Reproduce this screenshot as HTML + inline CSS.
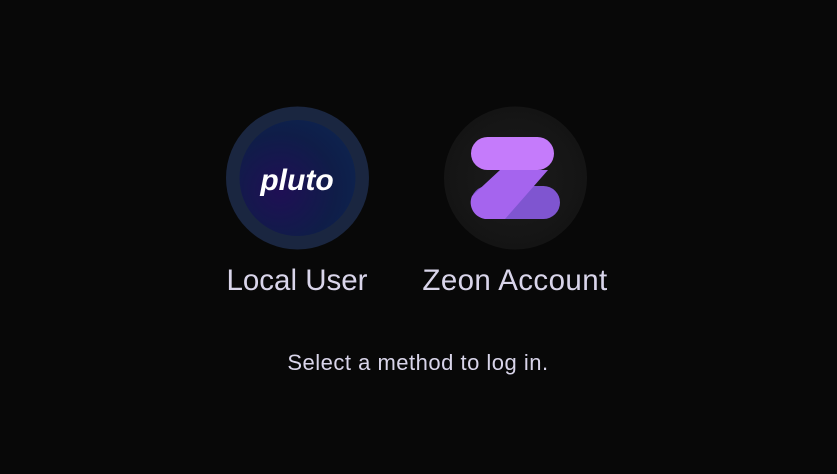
<!DOCTYPE html>
<html><head><style>
html,body{margin:0;padding:0;background:#080808;width:837px;height:474px;overflow:hidden;font-family:"Liberation Sans",sans-serif;}
.t{position:absolute;color:#d9d5ea;white-space:nowrap;transform:translateX(-50%);}
</style></head><body>
<svg width="837" height="474" style="position:absolute;left:0;top:0">
<defs>
<radialGradient id="pg" cx="0.35" cy="0.6" r="0.8">
<stop offset="0" stop-color="#1f0f55"/><stop offset="0.6" stop-color="#0f1d48"/><stop offset="1" stop-color="#0d2550"/>
</radialGradient>
<radialGradient id="zg" cx="0.5" cy="0.5" r="0.5">
<stop offset="0" stop-color="#1c1c1c"/><stop offset="1" stop-color="#141414"/>
</radialGradient>
</defs>
<circle cx="297.5" cy="178" r="71.5" fill="#1a2640"/>
<circle cx="297.5" cy="178" r="58" fill="url(#pg)"/>
<text x="297" y="190" text-anchor="middle" font-family="Liberation Sans" font-style="italic" font-weight="bold" font-size="30" fill="#fff">pluto</text>
<circle cx="515.5" cy="178" r="71.5" fill="url(#zg)"/>
<rect x="471" y="137" width="83" height="33" rx="16.5" fill="#c57bfb"/>
<rect x="471" y="186" width="89" height="33" rx="16.5" fill="#7f55d0"/>
<path d="M500 170 L548 170 L505 219 L487.5 219 A16.5 16.5 0 0 1 472 196 Z" fill="#a564ee"/>
</svg>
<div class="t" style="left:297px;top:264px;font-size:29.5px;">Local User</div>
<div class="t" style="left:515px;top:264px;font-size:29.5px;letter-spacing:0.4px;">Zeon Account</div>
<div class="t" style="left:418px;top:350px;font-size:22px;letter-spacing:0.5px;">Select a method to log in.</div>
</body></html>
